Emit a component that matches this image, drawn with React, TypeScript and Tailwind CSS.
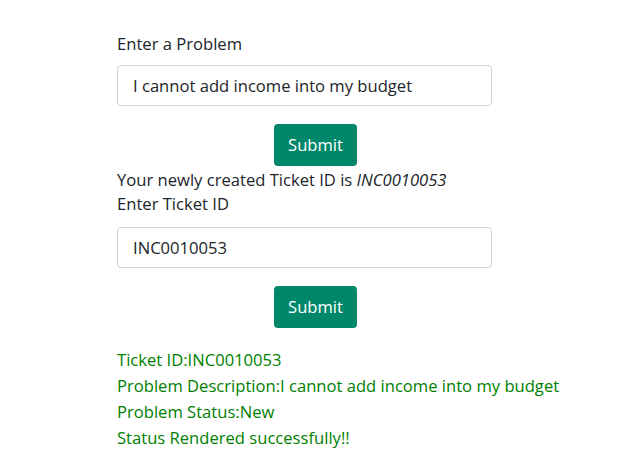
import React from 'react';

export default function App() {
  return (
    <div className="min-h-[476px] bg-white font-['Open_Sans',sans-serif] text-[16.6px] text-[#212529]">
      <div className="pl-[117px] pt-[32px] w-[492px] box-content">
        {/* Problem form */}
        <div className="leading-6">Enter a Problem</div>
        <input
          className="mt-[9px] block w-[375px] h-[41px] px-[15px] border border-[#ced4da] rounded-[4px] outline-none text-[#212529]"
          defaultValue="I cannot add income into my budget"
        />
        <div className="flex justify-center mt-[18px] w-[397px]">
          <button className="h-[42px] w-[83px] rounded-[4px] bg-[#00876a] text-white">Submit</button>
        </div>
        <div className="leading-6 mt-[2px]">
          Your newly created Ticket ID is <i>INC0010053</i>
        </div>
        <div className="leading-6">Enter Ticket ID</div>

        {/* Ticket lookup */}
        <input
          className="mt-[11px] block w-[375px] h-[41px] px-[15px] border border-[#ced4da] rounded-[4px] outline-none text-[#212529]"
          defaultValue="INC0010053"
        />
        <div className="flex justify-center mt-[18px] w-[397px]">
          <button className="h-[42px] w-[83px] rounded-[4px] bg-[#00876a] text-white">Submit</button>
        </div>

        <div className="mt-[19px] text-[#008000] leading-[26px]">
          <div>Ticket ID:INC0010053</div>
          <div>Problem Description:I cannot add income into my budget</div>
          <div>Problem Status:New</div>
          <div>Status Rendered successfully!!</div>
        </div>
      </div>
    </div>
  );
}
